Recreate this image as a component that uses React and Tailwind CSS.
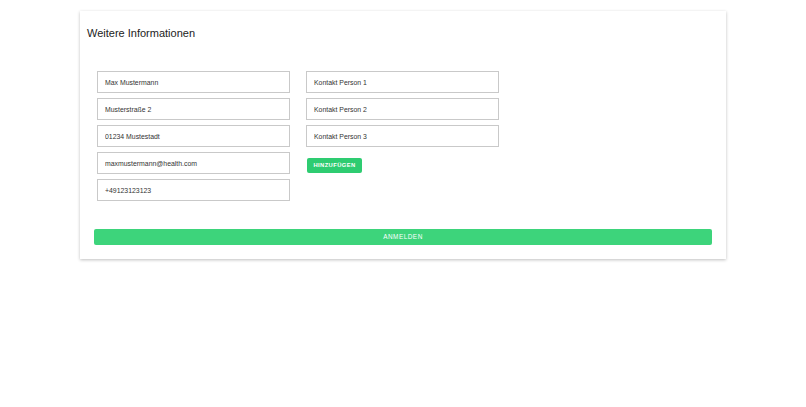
import React from 'react';

const personFields = ['Max Mustermann', 'Musterstraße 2', '01234 Mustestadt', 'maxmustermann@health.com', '+49123123123'];
const contacts = ['Kontakt Person 1', 'Kontakt Person 2', 'Kontakt Person 3'];

function Field({ value }) {
  return (
    <input
      readOnly
      value={value}
      className="w-[193px] h-[22px] border border-[#c9c9c9] bg-white px-[7px] text-[6.9px] text-[#333] outline-none"
    />
  );
}

export default function App() {
  return (
    <div className="min-h-[407px] bg-white pt-[11px] font-['Liberation_Sans',Arial,sans-serif]">
      <div className="w-[646px] mx-auto bg-white shadow-[0_1px_3px_rgba(0,0,0,0.25)] pt-[12px] pb-[13px] px-[14px]">
        <h2 className="text-[11px] leading-[20px] text-[#222] -ml-[7px]">Weitere Informationen</h2>

        <div className="flex gap-[16px] pl-[3px] mt-[28px]">
          <div className="flex flex-col gap-[5px]">
            {personFields.map((v) => <Field key={v} value={v} />)}
          </div>
          <div className="flex flex-col gap-[5px]">
            {contacts.map((v) => <Field key={v} value={v} />)}
            <button className="mt-[6px] w-[55px] h-[15px] ml-px rounded-[2px] bg-[#2ecc71] text-white text-[5.8px] font-bold tracking-[0.4px] uppercase">
              Hinzufügen
            </button>
          </div>
        </div>

        <button className="mt-[28px] w-full h-[16px] rounded-[2px] bg-[#3dd47b] text-white text-[6.4px] tracking-[0.5px] uppercase">
          Anmelden
        </button>
      </div>
    </div>
  );
}
